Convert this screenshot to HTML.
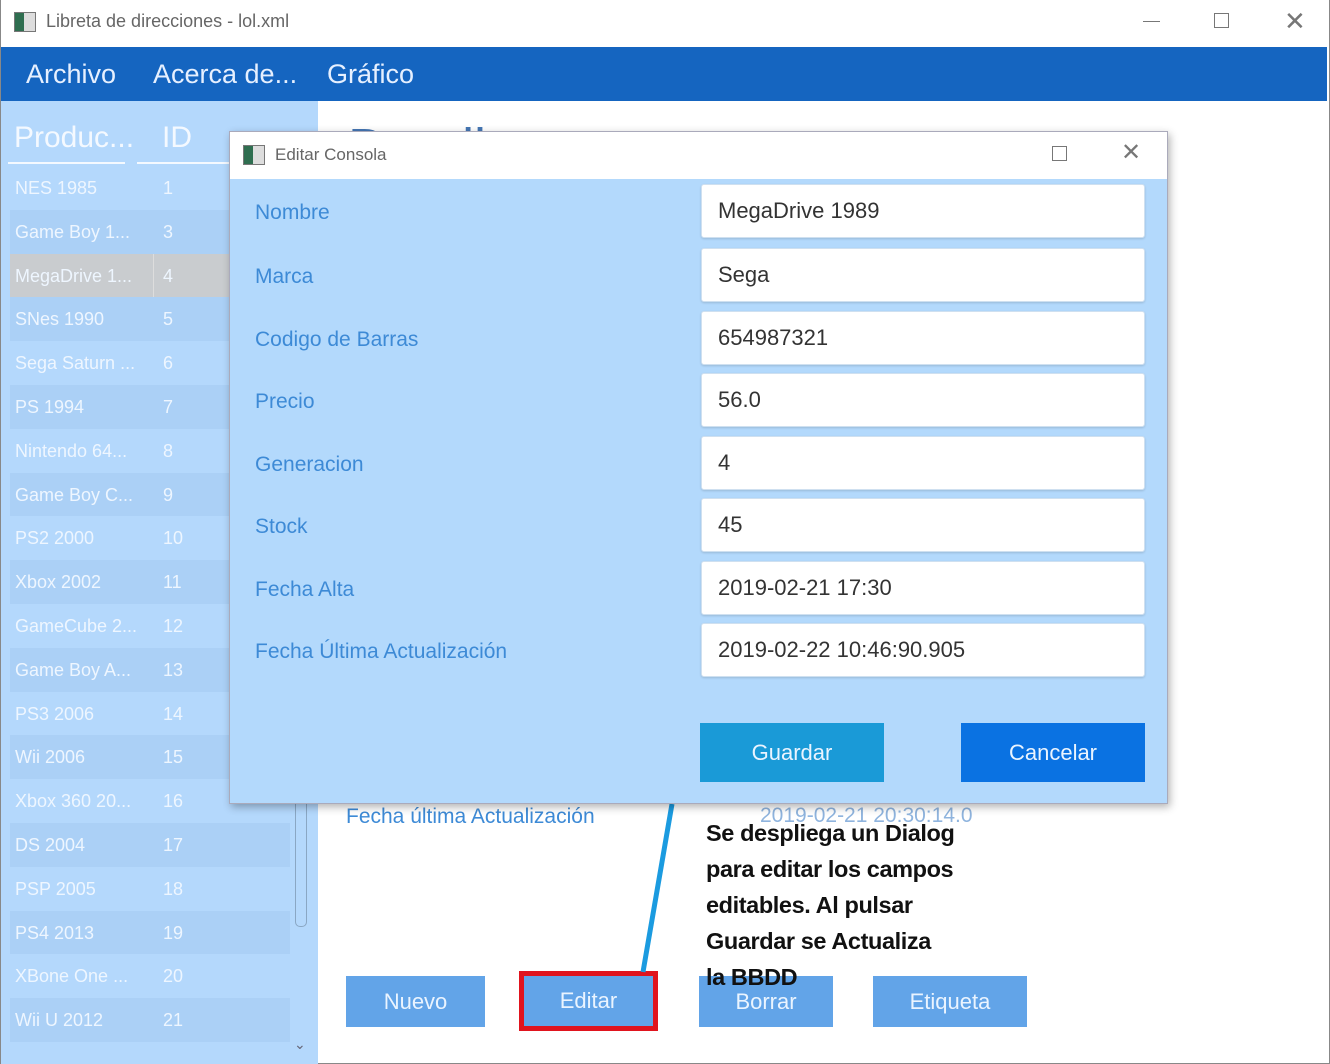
<!DOCTYPE html>
<html><head><meta charset="utf-8"><style>
*{margin:0;padding:0;box-sizing:border-box}
body{width:1330px;height:1064px;position:relative;overflow:hidden;background:#fff;font-family:"Liberation Sans",sans-serif}
.a{position:absolute;white-space:nowrap}
.row{position:absolute;left:10px;width:280px;height:44px;color:#eef6ff;font-size:18px;line-height:44px}
.row span{position:absolute}
.lab{position:absolute;left:25px;color:#3d8ad6;font-size:21px}
.fld{position:absolute;left:471px;width:444px;height:54px;background:#fff;border:1px solid #cfe0f0;border-radius:3px;box-shadow:0 1px 2px rgba(0,0,0,.15);font-size:22px;color:#333;line-height:52px;padding-left:16px}
.btn{position:absolute;background:#62a4e8;color:#eaf4ff;font-size:22px;text-align:center}
</style></head><body>
<div class="a" style="left:0;top:0;width:1330px;height:1064px;border:1px solid #888;border-top:none"></div>
<div class="a" style="left:14px;top:12px;width:22px;height:20px;border:1px solid #777;background:linear-gradient(90deg,#2f6e50 0 45%,#ddd 45%)"></div>
<div class="a" style="left:46px;top:11px;font-size:18px;color:#666">Libreta de direcciones - lol.xml</div>
<div class="a" style="left:1143px;top:21px;width:17px;height:1px;background:#777"></div>
<div class="a" style="left:1214px;top:13px;width:15px;height:15px;border:1px solid #777"></div>
<div class="a" style="left:1284px;top:6px;font-size:26px;color:#777;font-weight:100">✕</div>
<div class="a" style="left:1px;top:47px;width:1326px;height:54px;background:#1565c0"></div>
<div class="a" style="left:26px;top:59px;font-size:27px;color:#e6f0ff">Archivo</div>
<div class="a" style="left:153px;top:59px;font-size:27px;color:#e6f0ff">Acerca de...</div>
<div class="a" style="left:327px;top:59px;font-size:27px;color:#e6f0ff">Gráfico</div>
<div class="a" style="left:1px;top:101px;width:317px;height:963px;background:#b4d8fc"></div>
<div class="a" style="left:14px;top:121px;font-size:30px;color:#f4f9ff">Produc...</div>
<div class="a" style="left:162px;top:121px;font-size:30px;color:#f4f9ff">ID</div>
<div class="a" style="left:8px;top:162px;width:117px;height:2px;background:#f4f9ff"></div>
<div class="a" style="left:137px;top:162px;width:100px;height:2px;background:#f4f9ff"></div>
<div id="rows"></div>
<div class="a" style="left:295px;top:780px;width:12px;height:147px;border:1px solid #8aa7c4;border-radius:5px"></div>
<div class="a" style="left:294px;top:1036px;font-size:14px;color:#667">⌄</div>
<div class="a" style="left:348px;top:117px;font-size:54px;color:#4576b3">Detalles</div>
<div class="a" style="left:346px;top:805px;font-size:21px;color:#3d8ad6">Fecha última Actualización</div>
<div class="a" style="left:760px;top:804px;font-size:21px;color:#8fb4de">2019-02-21 20:30:14.0</div>
<div class="btn" style="left:346px;top:976px;width:139px;height:51px;line-height:51px">Nuevo</div>
<div class="a" style="left:519px;top:971px;width:139px;height:60px;border:5px solid #e0141e"></div>
<div class="btn" style="left:524px;top:976px;width:129px;height:50px;line-height:50px">Editar</div>
<div class="btn" style="left:699px;top:976px;width:134px;height:51px;line-height:51px">Borrar</div>
<div class="btn" style="left:873px;top:976px;width:154px;height:51px;line-height:51px">Etiqueta</div>
<svg class="a" style="left:0;top:0" width="1330" height="1064"><line x1="672" y1="804" x2="643" y2="972" stroke="#1b9be0" stroke-width="5"/></svg>
<div class="a" style="left:706px;top:815px;font-size:23.5px;font-weight:bold;color:#111;line-height:36px;letter-spacing:-0.4px">Se despliega un Dialog<br>para editar los campos<br>editables. Al pulsar<br>Guardar se Actualiza<br>la BBDD</div>
<div class="a" style="left:229px;top:131px;width:939px;height:673px;background:#b3d9fc;border:1px solid #aab;box-shadow:2px 3px 8px rgba(0,0,0,.3)">
  <div class="a" style="left:0;top:0;width:937px;height:47px;background:#fff"></div>
  <div class="a" style="left:13px;top:13px;width:22px;height:20px;border:1px solid #777;background:linear-gradient(90deg,#2f6e50 0 45%,#ddd 45%)"></div>
  <div class="a" style="left:45px;top:13px;font-size:17px;color:#666">Editar Consola</div>
  <div class="a" style="left:822px;top:14px;width:15px;height:15px;border:1px solid #777"></div>
  <div class="a" style="left:891px;top:6px;font-size:24px;color:#777">✕</div>
  <div class="lab" style="top:69px">Nombre</div>
  <div class="lab" style="top:133px">Marca</div>
  <div class="lab" style="top:196px">Codigo de Barras</div>
  <div class="lab" style="top:258px">Precio</div>
  <div class="lab" style="top:321px">Generacion</div>
  <div class="lab" style="top:383px">Stock</div>
  <div class="lab" style="top:446px">Fecha Alta</div>
  <div class="lab" style="top:508px">Fecha Última Actualización</div>
  <div class="fld" style="top:52px">MegaDrive 1989</div>
  <div class="fld" style="top:116px">Sega</div>
  <div class="fld" style="top:179px">654987321</div>
  <div class="fld" style="top:241px">56.0</div>
  <div class="fld" style="top:304px">4</div>
  <div class="fld" style="top:366px">45</div>
  <div class="fld" style="top:429px">2019-02-21 17:30</div>
  <div class="fld" style="top:491px">2019-02-22 10:46:90.905</div>
  <div class="btn" style="left:470px;top:591px;width:184px;height:59px;line-height:59px;background:#1a9ad7">Guardar</div>
  <div class="btn" style="left:731px;top:591px;width:184px;height:59px;line-height:59px;background:#0a72e2">Cancelar</div>
</div>
<script>
var d=[["NES 1985",1],["Game Boy 1...",3],["MegaDrive 1...",4],["SNes 1990",5],["Sega Saturn ...",6],["PS 1994",7],["Nintendo 64...",8],["Game Boy C...",9],["PS2 2000",10],["Xbox 2002",11],["GameCube 2...",12],["Game Boy A...",13],["PS3 2006",14],["Wii 2006",15],["Xbox 360 20...",16],["DS 2004",17],["PSP 2005",18],["PS4 2013",19],["XBone One ...",20],["Wii U 2012",21]];
var h="";d.forEach(function(r,i){var t=166+i*43.8;var bg=i==2?"#c9cccf":(i%2?"#abd0f6":"#b4d8fc");
h+='<div class="row" style="top:'+t+'px;background:'+bg+'"><span style="left:5px">'+r[0]+'</span>'+(i==2?'<span style="left:143px;top:0;width:1px;height:44px;background:#ddd"></span>':'')+'<span style="left:153px">'+r[1]+'</span></div>';});
document.getElementById("rows").innerHTML=h;
</script>
</body></html>
